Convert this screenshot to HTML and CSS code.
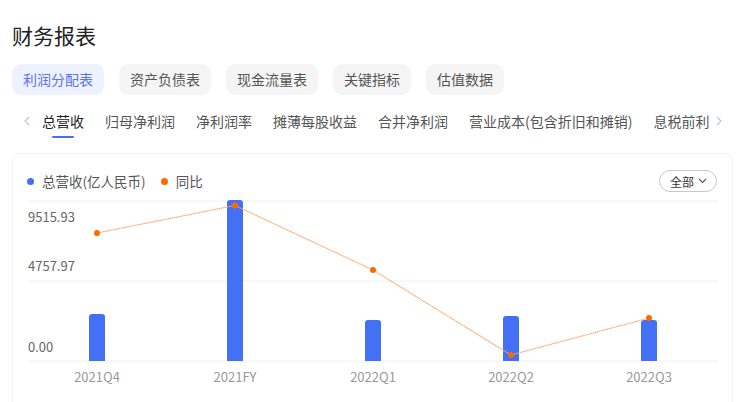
FILE: index.html
```html
<!DOCTYPE html>
<html>
<head>
<meta charset="utf-8">
<link rel="stylesheet" href="styles.css">
</head>
<body>
  <h1 class="page-title">财务报表</h1>

  <div class="report-tabs">
    <div class="report-tab active">利润分配表</div>
    <div class="report-tab">资产负债表</div>
    <div class="report-tab">现金流量表</div>
    <div class="report-tab">关键指标</div>
    <div class="report-tab">估值数据</div>
  </div>

  <div class="metric-bar">
    <svg class="arrow" width="8" height="10" viewBox="0 0 8 10"><polyline points="6,1 2,5 6,9" fill="none" stroke="#c4c4c4" stroke-width="1.1"/></svg>
    <div class="metric-list">
      <div class="metric active">总营收</div>
      <div class="metric">归母净利润</div>
      <div class="metric">净利润率</div>
      <div class="metric">摊薄每股收益</div>
      <div class="metric">合并净利润</div>
      <div class="metric">营业成本(包含折旧和摊销)</div>
      <div class="metric">息税前利润</div>
    </div>
    <svg class="arrow" width="8" height="10" viewBox="0 0 8 10"><polyline points="2,1 6,5 2,9" fill="none" stroke="#c4c4c4" stroke-width="1.1"/></svg>
  </div>

  <div class="chart-card">
    <div class="chart-head">
      <div class="legend">
        <span class="legend-item"><i class="dot blue"></i>总营收(亿人民币)</span>
        <span class="legend-item"><i class="dot orange"></i>同比</span>
      </div>
      <div class="range-btn">全部
        <svg width="9" height="6" viewBox="0 0 9 6"><polyline points="1,1 4.5,4.5 8,1" fill="none" stroke="#555" stroke-width="1.1"/></svg>
      </div>
    </div>

    <svg class="chart" width="719" height="215" viewBox="0 0 719 215">
      <g stroke="#f0f0f0" stroke-width="1">
        <line x1="16" y1="7" x2="705" y2="7"/>
        <line x1="16" y1="87" x2="705" y2="87"/>
        <line x1="16" y1="167" x2="705" y2="167"/>
      </g>
      <g class="y-label">
        <text x="15" y="22">9515.93</text>
        <text x="15" y="71">4757.97</text>
        <text x="15" y="152">0.00</text>
      </g>
      <g fill="#4470f6">
        <path d="M76,167 V123 Q76,120 79,120 H89 Q92,120 92,123 V167 Z"/>
        <path d="M214,167 V9 Q214,6 217,6 H227 Q230,6 230,9 V167 Z"/>
        <path d="M352,167 V129 Q352,126 355,126 H365 Q368,126 368,129 V167 Z"/>
        <path d="M490,167 V125 Q490,122 493,122 H503 Q506,122 506,125 V167 Z"/>
        <path d="M628,167 V129 Q628,126 631,126 H641 Q644,126 644,129 V167 Z"/>
      </g>
      <polyline points="84,39 222,11.5 360,76 498,161 636,124" fill="none" stroke="#ffa366" stroke-width="1.1" stroke-dasharray="1.5 0.5"/>
      <g fill="#ff6a00">
        <circle cx="84" cy="39" r="3"/>
        <circle cx="222" cy="11.5" r="3"/>
        <circle cx="360" cy="76" r="3"/>
        <circle cx="498" cy="161" r="3"/>
        <circle cx="636" cy="124" r="3"/>
      </g>
      <g class="x-label">
        <text x="84" y="182">2021Q4</text>
        <text x="222" y="182">2021FY</text>
        <text x="360" y="182">2022Q1</text>
        <text x="498" y="182">2022Q2</text>
        <text x="636" y="182">2022Q3</text>
      </g>
    </svg>
  </div>
</body>
</html>
```

FILE: styles.css
```css
/* Financial report page */
body {
  margin: 0;
  padding: 0 17px 0 12px;
  background: #fff;
  font-family: "Noto Sans CJK SC", "Noto Sans", sans-serif;
  color: #222;
  overflow: hidden;
}

.page-title {
  margin: 0;
  padding-top: 21px;
  font-size: 21px;
  font-weight: 400;
  line-height: 29px;
  color: #222;
}

.report-tabs {
  display: flex;
  gap: 15px;
  margin-top: 14px;
}

.report-tab {
  height: 31px;
  line-height: 31px;
  padding: 0 11px;
  font-size: 14px;
  color: #555;
  background: #f5f5f5;
  border-radius: 9px;
}

.report-tab.active {
  color: #5b72f2;
  background: #eef2ff;
}

.metric-bar {
  display: flex;
  align-items: center;
  height: 34px;
  margin-top: 9px;
  padding: 0 10px 0 11px;
}

.metric-list {
  flex: 1;
  display: flex;
  gap: 21px;
  overflow: hidden;
  white-space: nowrap;
  margin: 0 6px 0 11px;
  height: 34px;
}

.metric {
  position: relative;
  font-size: 14px;
  line-height: 34px;
  color: #555;
  flex-shrink: 0;
}

.metric.active {
  color: #222;
}

.metric.active::after {
  content: "";
  position: absolute;
  left: 10px;
  right: 10px;
  bottom: 0;
  height: 2px;
  border-radius: 1px;
  background: #4470f6;
}

.chart-card {
  margin-top: 15px;
  border: 1px solid #f2f2f2;
  border-radius: 8px;
  height: 300px;
}

.chart-head {
  display: flex;
  align-items: center;
  justify-content: space-between;
  padding: 16px 15px 0 14px;
  height: 22px;
}

.legend {
  display: flex;
  gap: 15px;
  font-size: 13.5px;
  color: #555;
}

.legend-item {
  display: flex;
  align-items: center;
  gap: 8px;
}

.dot {
  width: 7px;
  height: 7px;
  border-radius: 50%;
}

.dot.blue {
  background: #4470f6;
}

.dot.orange {
  background: #ff6a00;
}

.range-btn {
  display: flex;
  align-items: center;
  gap: 4px;
  height: 20px;
  padding: 0 9px 0 10px;
  border: 1px solid #c8c8c8;
  border-radius: 11px;
  font-size: 12px;
  color: #333;
}

.chart {
  display: block;
  margin-top: 2px;
}

.y-label text {
  font-size: 13px;
  fill: #666;
  dominant-baseline: central;
}

.x-label text {
  font-size: 13px;
  fill: #999;
  text-anchor: middle;
  dominant-baseline: central;
}
```
